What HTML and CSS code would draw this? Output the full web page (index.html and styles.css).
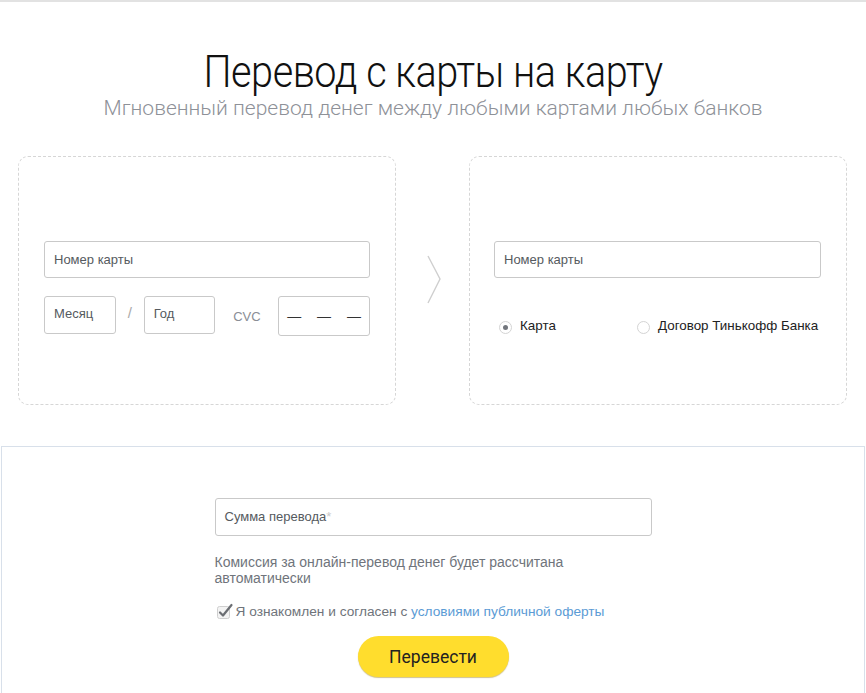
FILE: index.html
```html
<!DOCTYPE html>
<html lang="ru">
<head>
<meta charset="utf-8">
<title>Перевод с карты на карту</title>
<link rel="stylesheet" href="styles.css">
</head>
<body>
<div class="page">
  <header class="head">
    <h1 class="title"><span class="title-text">Перевод с карты на карту</span></h1>
    <p class="subtitle">Мгновенный перевод денег между любыми картами любых банков</p>
  </header>

  <div class="cards">
    <div class="card card-from">
      <div class="field">Номер карты</div>
      <div class="row">
        <div class="field small">Месяц</div>
        <span class="slash">/</span>
        <div class="field small">Год</div>
        <span class="cvc-label">CVC</span>
        <div class="field cvc"><span>—</span><span>—</span><span>—</span></div>
      </div>
    </div>
    <div class="arrow">
      <svg width="16" height="50" viewBox="0 0 16 50"><path d="M2 1 L14 24 L2 48" fill="none" stroke="#cfcfcf" stroke-width="1.4"/></svg>
    </div>
    <div class="card card-to">
      <div class="field">Номер карты</div>
      <div class="radios">
        <label class="radio"><span class="dot on"></span>Карта</label>
        <label class="radio"><span class="dot"></span>Договор Тинькофф Банка</label>
      </div>
    </div>
  </div>

  <section class="bottom">
    <div class="inner">
      <div class="field amount">Сумма перевода<span class="star">*</span></div>
      <p class="note">Комиссия за онлайн-перевод денег будет рассчитана автоматически</p>
      <div class="agree">
        <svg class="check" width="18" height="17" viewBox="0 0 18 17">
          <rect x="1.5" y="3.5" width="12" height="12" rx="2" fill="#f3f3f3" stroke="#cfcfcf"/>
          <path d="M4 9.5 L7 12.5 L15.5 2" fill="none" stroke="#6b6e73" stroke-width="2.2" stroke-linecap="round" stroke-linejoin="round"/>
        </svg>
        <span>Я ознакомлен и согласен с <a class="link" href="#">условиями публичной оферты</a></span>
      </div>
      <div class="btn-wrap"><button class="btn">Перевести</button></div>
    </div>
  </section>
</div>
</body>
</html>
```
FILE: styles.css
```css
* { box-sizing: border-box; }
html, body { margin: 0; padding: 0; background: #fff; }
body {
  font-family: "Liberation Sans", Arial, sans-serif;
  color: #333;
  border-top: 2px solid #e2e2e2;
  overflow: hidden;
}
.page { width: 866px; }

.head { text-align: center; padding-top: 44px; }
.title {
  margin: 0;
  font-family: Roboto, "Liberation Sans", sans-serif;
  font-weight: 300;
  font-size: 44px;
  line-height: 52px;
  color: #111;
  letter-spacing: -0.5px;
}
.title-text {
  display: inline-block;
  transform: scaleX(0.9);
}
.subtitle {
  margin: 0;
  font-family: Roboto, "Liberation Sans", sans-serif;
  font-weight: 300;
  font-size: 21px;
  line-height: 20px;
  color: #8e9198;
}

.cards {
  display: flex;
  align-items: stretch;
  padding-left: 18px;
  margin-top: 38px;
}
.card {
  width: 378px;
  height: 249px;
  border: 1px dashed #d6d6d6;
  border-radius: 10px;
  padding: 84px 25px 0 25px;
}
.card-to { padding: 84px 25px 0 24px; }
.arrow {
  width: 73px;
  display: flex;
  align-items: center;
  justify-content: center;
  padding-left: 3px;
  padding-bottom: 2px;
}

.field {
  height: 37px;
  border: 1px solid #c9c9c9;
  border-radius: 3px;
  font-size: 13px;
  line-height: 35px;
  padding-left: 9px;
  color: #555a60;
  background: #fff;
}
.row {
  display: flex;
  align-items: flex-start;
  margin-top: 18px;
}
.field.small { width: 72px; height: 38px; line-height: 34px; }
.slash {
  width: 28px;
  text-align: center;
  color: #aaa;
  font-size: 15px;
  line-height: 34px;
}
.cvc-label {
  width: 63px;
  text-align: center;
  color: #8a8e95;
  font-size: 13px;
  line-height: 42px;
}
.field.cvc {
  width: 92px;
  height: 40px;
  line-height: 38px;
  display: flex;
  justify-content: space-between;
  padding: 0 8px 0 8px;
  color: #333;
  font-size: 14px;
}

.radios {
  display: flex;
  margin-top: 40px;
  padding-left: 5px;
}
.radio {
  display: flex;
  align-items: center;
  font-size: 13.4px;
  color: #222;
  line-height: 16px;
}
.radio:first-child { width: 138px; }
.dot {
  width: 13px;
  height: 13px;
  border: 1px solid #d4d4d4;
  border-radius: 50%;
  margin-right: 8px;
  margin-top: 2px;
  position: relative;
  background: #fff;
}
.dot.on::after {
  content: "";
  position: absolute;
  left: 3px; top: 3px;
  width: 5px; height: 5px;
  border-radius: 50%;
  background: #72767d;
}

.bottom {
  margin: 41px 1px 0 1px;
  border: 1px solid #d8e0ea;
  border-bottom: none;
  height: 260px;
  padding-top: 51px;
}
.inner { width: 437px; margin: 0 auto; }
.field.amount { height: 38px; line-height: 36px; color: #555a60; }
.star { color: #c9c9c9; }
.note {
  margin: 18px 0 0 0;
  width: 360px;
  font-size: 14px;
  line-height: 16px;
  color: #6f747b;
}
.agree {
  display: flex;
  align-items: center;
  margin-top: 17px;
  font-size: 13.7px;
  color: #6f747b;
  line-height: 16px;
}
.check { margin-left: 1px; margin-right: 2px; }
.link { color: #5b9bd5; text-decoration: none; }
.btn-wrap { display: flex; justify-content: center; margin-top: 16px; }
.btn {
  width: 151px;
  height: 41px;
  border: none;
  border-radius: 21px;
  background: #ffdd2d;
  box-shadow: 0 1px 1px rgba(150, 120, 0, 0.45);
  font-family: Roboto, "Liberation Sans", sans-serif;
  font-size: 17.5px;
  color: #222;
  padding: 0;
}
```
